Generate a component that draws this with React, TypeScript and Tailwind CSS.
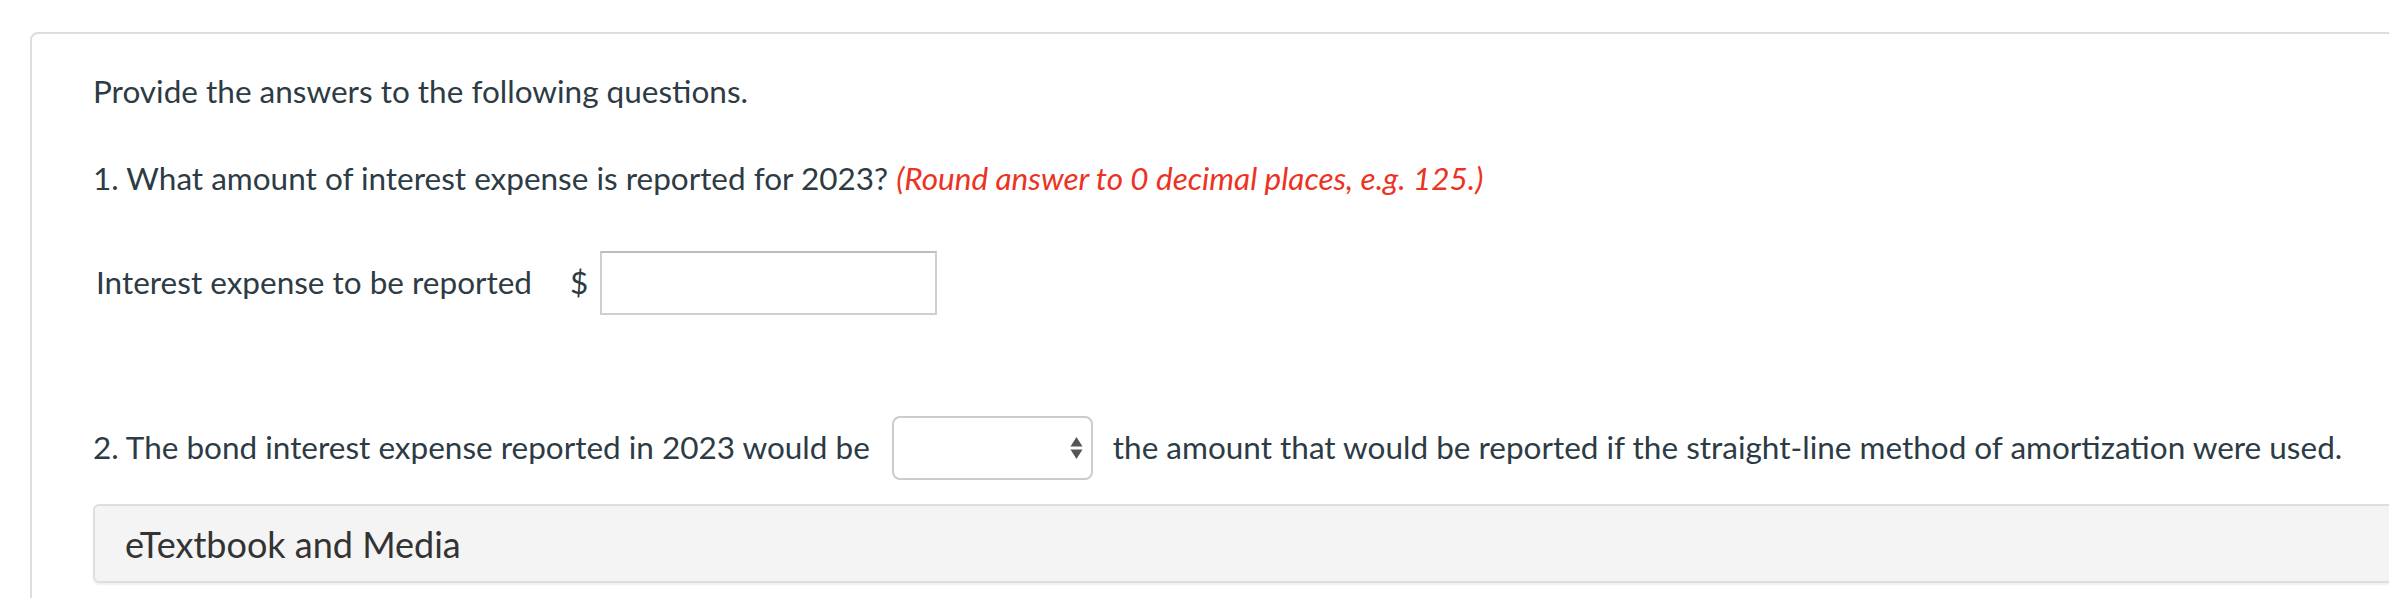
import { useState } from 'react'

export default function App() {
  const [amount, setAmount] = useState('')
  const [choice, setChoice] = useState('')

  return (
    <div className="min-h-screen w-full overflow-hidden bg-white pl-[30px] pt-[32px] font-['Lato','Liberation_Sans',sans-serif] text-[31.5px] text-[#2d3b45]">
      <div className="w-[2420px] rounded-lg border-2 border-[#dddddd] pb-[40px] pl-[61px] pt-[35px]">
        <p className="leading-[44px]">Provide the answers to the following questions.</p>

        <p className="mt-[43px] leading-[44px]">
          1. What amount of interest expense is reported for 2023?{' '}
          <span className="italic text-[#ec3323]">(Round answer to 0 decimal places, e.g. 125.)</span>
        </p>

        {/* Question 1 answer */}
        <div className="mt-[51px] flex items-center pl-[3px]">
          <span>Interest expense to be reported</span>
          <span className="ml-[38px] mr-[12px]">$</span>
          <input
            value={amount}
            onChange={e => setAmount(e.target.value)}
            className="h-[64px] w-[337px] border-2 border-[#cfcfcf] border-t-[#bdbdbd] bg-white px-3 outline-none"
          />
        </div>

        {/* Question 2 */}
        <div className="mt-[101px] flex items-center">
          <span>2. The bond interest expense reported in 2023 would be</span>
          <div className="relative ml-[22px] mr-[20px] h-[64px] w-[201px]">
            <select
              value={choice}
              onChange={e => setChoice(e.target.value)}
              className="h-full w-full appearance-none rounded-lg border-2 border-[#cccccc] bg-white px-3 outline-none"
            >
              <option value=""></option>
              <option value="greater">greater than</option>
              <option value="less">less than</option>
              <option value="equal">equal to</option>
            </select>
            <svg
              className="pointer-events-none absolute right-[10px] top-1/2 -translate-y-1/2"
              width="13"
              height="24"
              viewBox="0 0 13 24"
            >
              <path d="M6.5 1 L12.5 10.5 L0.5 10.5 Z" fill="#555555" />
              <path d="M6.5 23 L12.5 13.5 L0.5 13.5 Z" fill="#555555" />
            </svg>
          </div>
          <span>the amount that would be reported if the straight-line method of amortization were used.</span>
        </div>

        {/* eTextbook bar */}
        <div className="mt-[24px] flex h-[79px] items-center rounded-md border-2 border-[#dedede] bg-[#f4f4f4] pl-[30px] text-[36px] text-[#333333] shadow-[0_2px_2px_rgba(0,0,0,0.06)]">
          eTextbook and Media
        </div>
      </div>
    </div>
  )
}
